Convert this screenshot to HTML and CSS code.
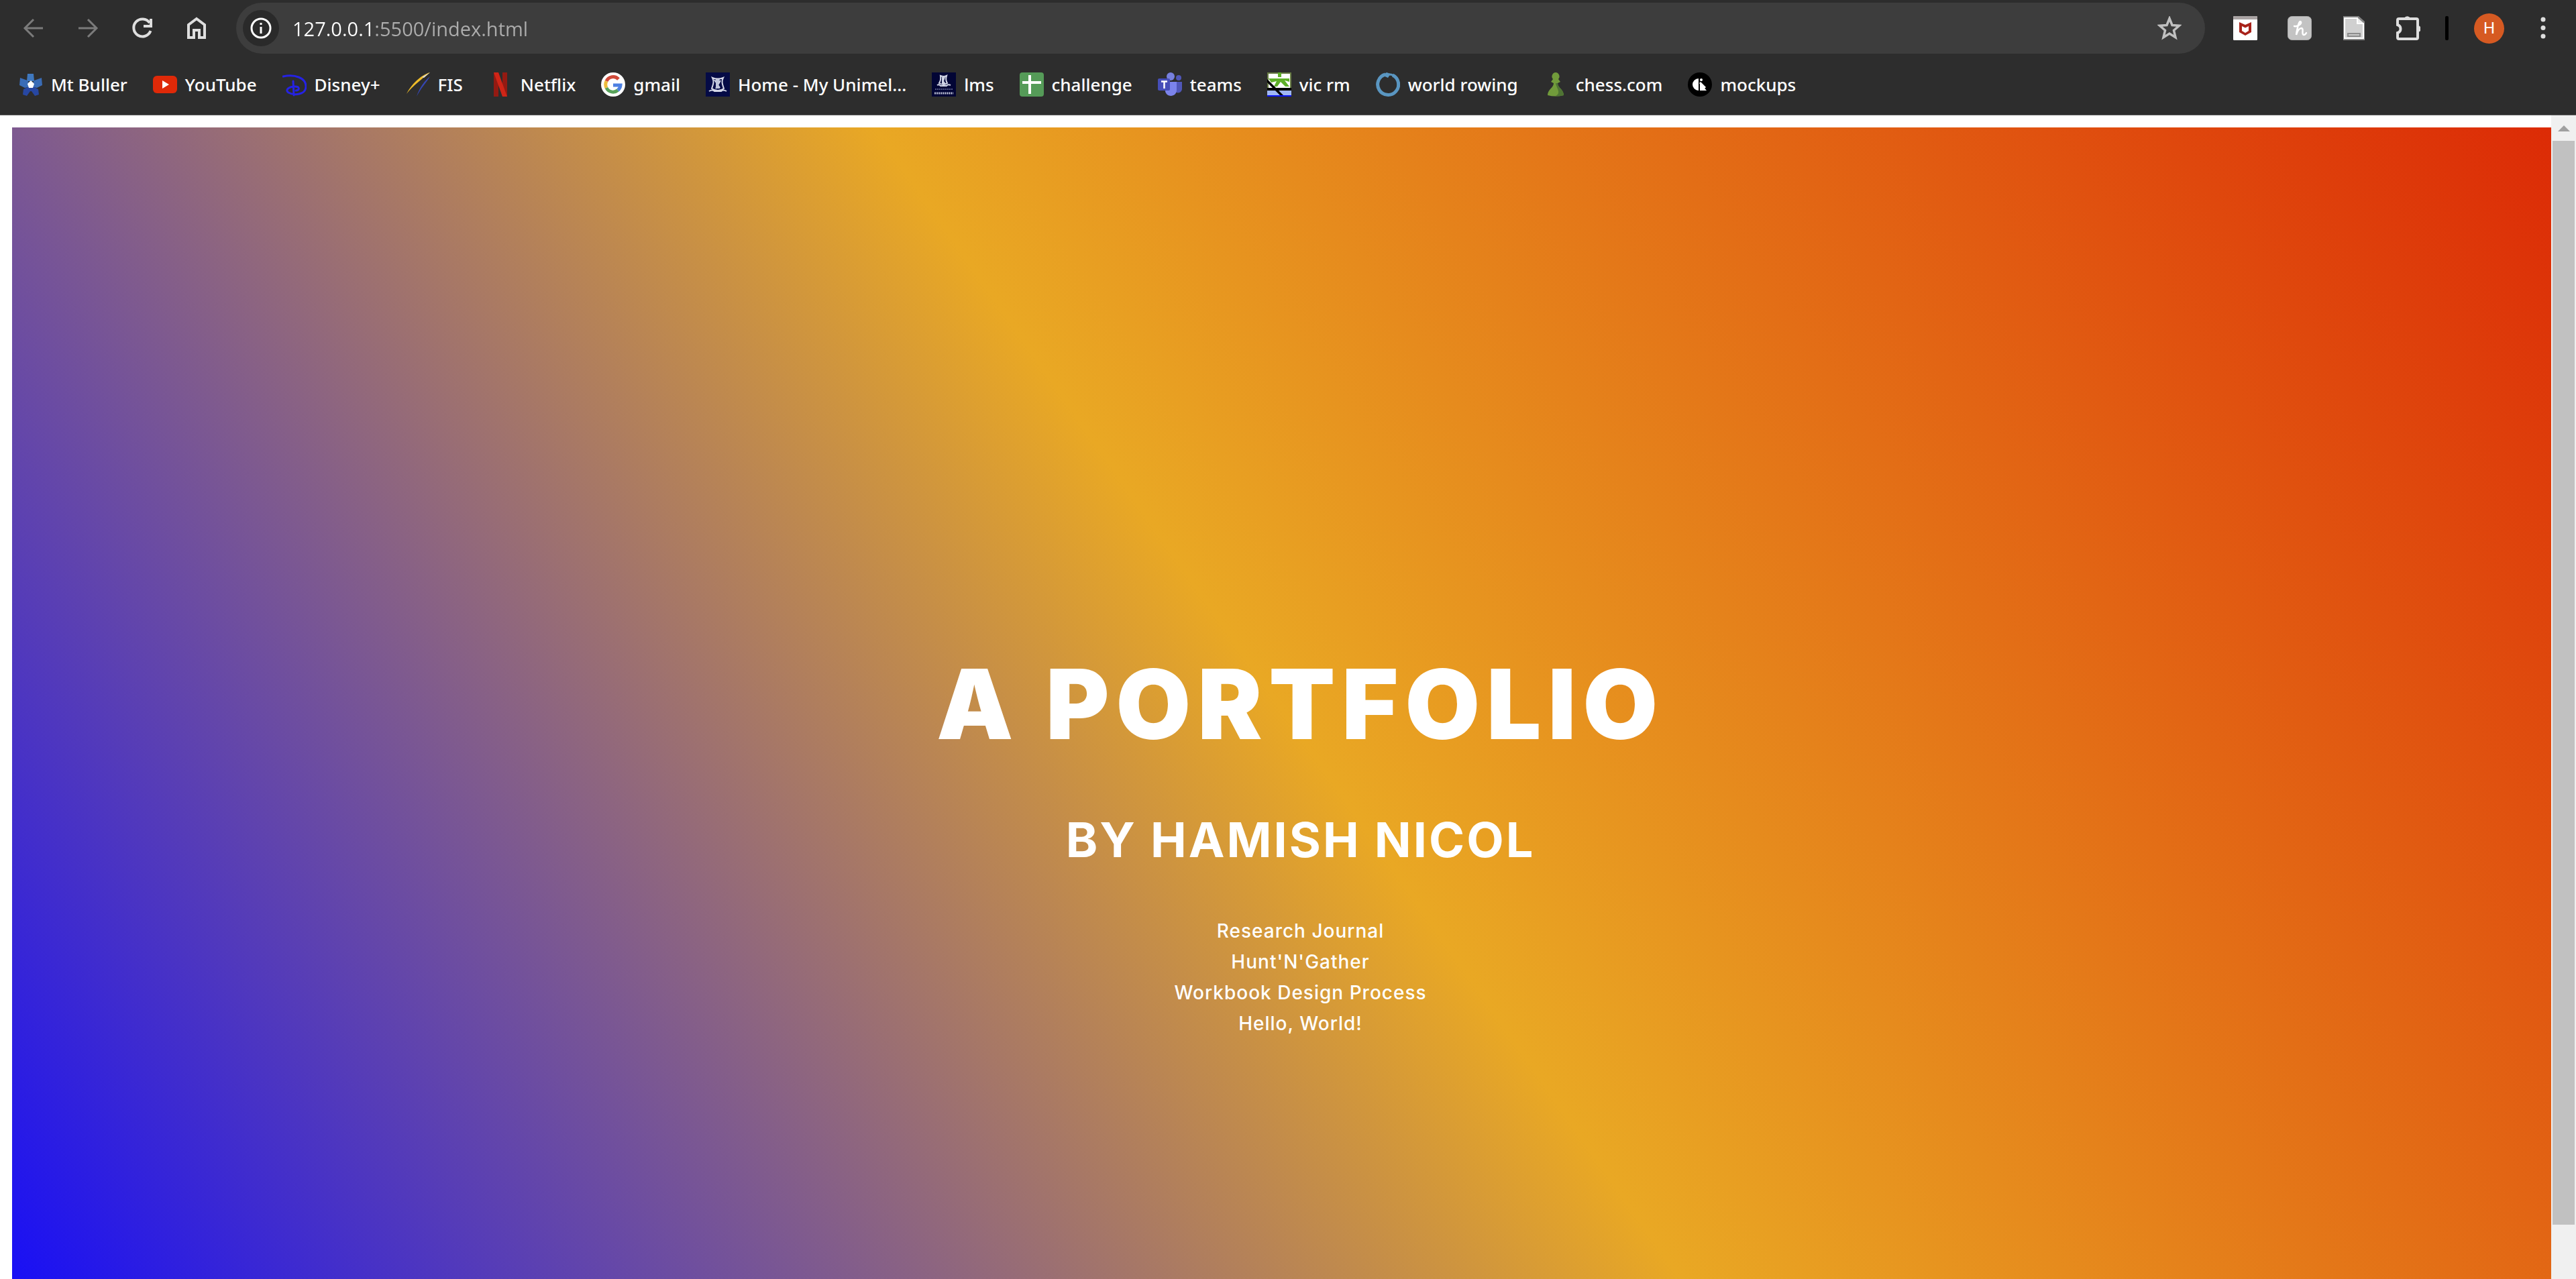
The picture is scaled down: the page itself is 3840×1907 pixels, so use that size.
FILE: index.html
```html
<!DOCTYPE html>
<html lang="en">
<head>
<meta charset="utf-8">
<title>A Portfolio</title>
<link rel="stylesheet" href="styles.css">
</head>
<body>
<header class="browser">
  <div class="toolbar">
    <div class="nav-buttons">
      <button class="icon-button dim" aria-label="Back"><svg viewBox="0 0 36 36"><path d="M32 18H6M18 5L5 18l13 13" fill="none" stroke="currentColor" stroke-width="3"/></svg></button>
      <button class="icon-button dim" aria-label="Forward"><svg viewBox="0 0 36 36"><path d="M4 18h26M18 5l13 13-13 13" fill="none" stroke="currentColor" stroke-width="3"/></svg></button>
      <button class="icon-button" aria-label="Reload"><svg viewBox="0 0 36 36"><path d="M29 10A13 13 0 1 0 30.500 22M31 4v11H20" fill="none" stroke="currentColor" stroke-width="4"/></svg></button>
      <button class="icon-button" aria-label="Home"><svg viewBox="0 0 36 36"><path d="M6 32V13L18 4l12 9v19h-8V21h-8v11z" fill="none" stroke="currentColor" stroke-width="4"/></svg></button>
    </div>
    <div class="omnibox">
      <button class="site-info" aria-label="Site information"><svg viewBox="0 0 36 36"><circle cx="18" cy="18" r="14" fill="none" stroke="currentColor" stroke-width="3"/><path d="M18 16v10M18 10v3" stroke="currentColor" stroke-width="3"/></svg></button>
      <input class="address" type="text" aria-label="Address" value="127.0.0.1:5500/index.html">
      <button class="icon-button star" aria-label="Bookmark this page"><svg viewBox="0 0 36 36"><path d="M18 3.500l4 10 10.500.800-8 7 2.500 10.500-9-5.700-9 5.700 2.500-10.500-8-7L14 13.500z" fill="none" stroke="currentColor" stroke-width="3.500"/></svg></button>
    </div>
    <div class="extensions">
      <button class="icon-button" aria-label="McAfee"><svg viewBox="0 0 36 36"><rect width="36" height="36" rx="1.500" fill="#fff"/><path d="M0 5V1.500A1.500 1.500 0 0 1 1.500 0h33A1.500 1.500 0 0 1 36 1.500V5z" fill="#a9a3a3"/><path d="M9 9l9 4 9-4v15l-9 5-9-5z" fill="#a8231b"/><path d="M13 15l5 2.500 5-2.500v7l-5 3-5-3z" fill="#fff"/></svg></button>
      <button class="icon-button" aria-label="Honey"><svg viewBox="0 0 36 36"><rect x=".5" y=".5" width="35" height="35" rx="6" fill="#c3c3c3" stroke="#ababab"/><path d="M10 15c5 1 11-3 10-6-2-4-5 5-7 19 2-7 5-10 8-10 4 1-1 9 3 10 2 0 3-1 4-3" fill="none" stroke="#fff" stroke-width="2.500" stroke-linecap="round"/></svg></button>
      <button class="icon-button" aria-label="Document viewer"><svg viewBox="0 0 36 36"><path d="M2 0h23l9 8v28H2z" fill="#858585"/><path d="M4 3h19v8h9v22H4z" fill="#d0d0d0" stroke="#fff" stroke-width="2"/><path d="M24 3l8 7h-8z" fill="#eee"/><path d="M8 25h20v6H8z" fill="#8c8c8c"/><path d="M10 28h16" stroke="#c9c9c9" stroke-width="2"/></svg></button>
      <button class="icon-button" aria-label="Extensions"><svg viewBox="0 0 36 36"><path d="M2 6q0-2 2-2h26q2 0 2 2v26q0 2-2 2H4q-2 0-2-2v-7c6-2 6-10 0-12z" fill="none" stroke="currentColor" stroke-width="4"/><path d="M12 3a5 5 0 0 1 9 0zM32 14a5 5 0 0 1 0 10z" fill="currentColor"/></svg></button>
    </div>
    <span class="divider"></span>
    <button class="avatar" aria-label="Profile">H</button>
    <button class="icon-button" aria-label="Menu"><svg viewBox="0 0 36 36"><g fill="currentColor"><circle cx="18" cy="5" r="3.500"/><circle cx="18" cy="17.500" r="3.500"/><circle cx="18" cy="30" r="3.500"/></g></svg></button>
  </div>
  <nav class="bookmarks" aria-label="Bookmarks">
    <a href="#"><svg viewBox="0 0 36 36"><path d="M13 2h9l1 11h-11z" fill="#3f78bf"/><path d="M2 8l11 4 5 9-9 2-8-4zM34 8l-11 4-5 9 9 2 8-4z" fill="#3a6cb6"/><path d="M17 20l-10 5-1 8 6 2 5-7h2l5 7 6-2-1-8-10-5z" fill="#2747a2"/><path d="M18 12l5 5-2 6h-6l-2-6z" fill="#fff"/></svg>Mt Buller</a>
    <a href="#"><svg viewBox="0 0 36 36"><rect y="5" width="36" height="26" rx="6" fill="#df2908"/><path d="M14 12l10 6-10 6z" fill="#fff"/></svg>YouTube</a>
    <a href="#"><svg viewBox="0 0 36 36"><path d="M1 6C18 2 36 8 35 22c-1 11-17 13-26 8-5-3-1-9 10-9 7 0 7 6 1 6M16 13l1 21" fill="none" stroke="#2522e4" stroke-width="3" stroke-linecap="round"/></svg>Disney+</a>
    <a href="#"><svg viewBox="0 0 36 36"><path d="M1 32C8 18 22 4 36 0C25 9 10 20 1 32z" fill="#efbc29"/><path d="M16 36C20 23 28 12 36 6C30 16 22 24 16 36z" fill="#3546b3"/><path d="M24 7L36 0l-9 8z" fill="#ddd"/></svg>FIS</a>
    <a href="#"><svg viewBox="0 0 36 36"><path d="M8 0h7v36H8zM21 0h7v36h-7z" fill="#941a12"/><path d="M8 0h7l13 36h-7z" fill="#cf2517"/></svg>Netflix</a>
    <a href="#"><svg viewBox="0 0 36 36"><circle cx="18" cy="18" r="18" fill="#fff"/><g fill="none" stroke-width="5"><path d="M26 10A11 11 0 0 0 8 13" stroke="#d04a3a"/><path d="M8 13a11 11 0 0 0 0 10" stroke="#edbd3c"/><path d="M8 23a11 11 0 0 0 17 3.500" stroke="#57a25a"/><path d="M25 26.500a11 11 0 0 0 4-7.500H18" stroke="#4d80e2"/></g></svg>gmail</a>
    <a href="#"><svg viewBox="0 0 36 36"><path d="M0 0h36v36H0z" fill="#050b46"/><path d="M10 8c5 2 11 2 16 0-3 6-1 10 1 16-5 4-13 4-18 0 2-6 4-10 1-16zM5 28q5-3 8 0h10q3-3 8 0M13 11l8 12M22 12l-7 12" fill="none" stroke="#d5d8e8" stroke-width="2"/><path d="M15 10h6l-2 9 2 5h-6z" fill="#bfc4da"/></svg>Home - My Unimel…</a>
    <a href="#"><svg viewBox="0 0 36 36"><path d="M0 0h36v36H0z" fill="#020535"/><path d="M13 5q5 2 9 0-2 6 1 11-5 4-12 0 3-5 2-11zM8 19q3-2 5 1h9q2-3 6-1" fill="none" stroke="#d5d8e8" stroke-width="2"/><path d="M15 7h5l-2 6 3 4h-6z" fill="#cfd3e4"/><path d="M5 25h26" stroke="#555984" stroke-width="2" stroke-dasharray="2 1"/><path d="M4 31h28" stroke="#b9bdd3" stroke-width="3" stroke-dasharray="2 1"/></svg>lms</a>
    <a href="#"><svg viewBox="0 0 36 36"><rect width="36" height="36" rx="4" fill="#559b58"/><path d="M15 4v28M4 15h28" stroke="#fff" stroke-width="4"/></svg>challenge</a>
    <a href="#"><svg viewBox="0 0 36 36"><circle cx="19" cy="6" r="6" fill="#7780de"/><circle cx="31" cy="8" r="4" fill="#5057b8"/><path d="M24 14h12v10c0 6-6 8-10 5z" fill="#5057b8"/><path d="M11 14h17v12c0 11-15 12-17 2z" fill="#7b83eb"/><rect y="9" width="18" height="18" rx="2" fill="#464eb8"/><path d="M5 13.500h9M9.500 13v11" stroke="#fff" stroke-width="2.500"/></svg>teams</a>
    <a href="#"><svg viewBox="0 0 36 36"><path d="M0 0h36v36H0z" fill="#fff"/><path d="M1 1h34v24H1z" fill="none" stroke="#667a43" stroke-width="2"/><path d="M16 0h5v7h-5zM2 9h31v5l-7-2 7 9h-6l-7-7-5 7h-5l4-8-8 2z" fill="#5eaf29"/><path d="M0 27h36v9H0z" fill="#9fb6f4"/><path d="M0 34h36v2H0z" fill="#0712f2"/><path d="M0 23h36v4H0zM0 10l24 24-5 0L0 15z" fill="#000"/></svg>vic rm</a>
    <a href="#"><svg viewBox="0 0 36 36"><path d="M14 3A15.500 15.500 0 1 0 25 4" fill="none" stroke="#5a96c1" stroke-width="5"/><path d="M9 4l7-4 6 2-4 6z" fill="#5a96c1"/><path d="M20 3c9 0 14 8 13 18" fill="none" stroke="#5a96c1" stroke-width="3"/></svg>world rowing</a>
    <a href="#"><svg viewBox="0 0 36 36"><path d="M18 0a6 6 0 0 1 4 10l3 4-4 2c0 7 9 9 9 18q-12 3-24 0c0-9 9-11 9-18l-4-2 3-4A6 6 0 0 1 18 0z" fill="#719b3b"/><path d="M18 16h3c0 7 9 9 9 18q-6 2-12 1c9-4 1-12 0-19z" fill="#4f7434"/></svg>chess.com</a>
    <a href="#"><svg viewBox="0 0 36 36"><circle cx="18" cy="18" r="18" fill="#000"/><path d="M16 9v18A9 9 0 0 1 16 9zM18 15l10 12H18z" fill="#fff"/><circle cx="20" cy="11" r="2" fill="#fff"/><path d="M18 15l8 8" stroke="#fff" stroke-width="3"/></svg>mockups</a>
  </nav>
</header>
<div class="viewport">
  <div class="page">
    <main class="hero">
      <h1>A PORTFOLIO</h1>
      <h2>BY HAMISH NICOL</h2>
      <ul class="links">
        <li><a href="#">Research Journal</a></li>
        <li><a href="#">Hunt'N'Gather</a></li>
        <li><a href="#">Workbook Design Process</a></li>
        <li><a href="#">Hello, World!</a></li>
      </ul>
    </main>
  </div>
  <div class="scrollbar">
    <span class="arrow"></span>
    <span class="thumb"></span>
  </div>
</div>
</body>
</html>
```
FILE: styles.css
```css
* { box-sizing: border-box; }

body {
  margin: 0;
  height: 100vh;
  display: flex;
  flex-direction: column;
  overflow: hidden;
  background: #fff;
}

button {
  border: 0;
  padding: 0;
  background: none;
  color: inherit;
  font: inherit;
}

svg { display: block; flex: none; width: 36px; height: 36px; }

/* Browser chrome */
.browser {
  flex: none;
  background: #2d2d2d;
  border-bottom: 1px solid #606060;
  color: #dedede;
  font-family: "Noto Sans", "Open Sans", sans-serif;
}

.toolbar {
  display: flex;
  align-items: center;
  padding: 4px 31px 0 32px;
}

.icon-button { display: block; width: 36px; height: 36px; }
.dim { color: #7b7b7b; }
.nav-buttons { display: flex; gap: 45px; margin-right: 41px; }

.omnibox {
  flex: 1;
  display: flex;
  align-items: center;
  height: 76px;
  padding: 0 35px 0 10px;
  border-radius: 38px;
  background: #3d3d3d;
}

.site-info {
  display: grid;
  place-items: center;
  width: 54px;
  height: 54px;
  border-radius: 50%;
  background: #2a2a2a;
  color: #fff;
}

.address {
  flex: 1;
  min-width: 0;
  margin-left: 20px;
  padding: 0;
  border: 0;
  /* host in white, port and path in grey */
  background: linear-gradient(90deg, #fff 0 4.23em, #adadad 4.23em);
  background-clip: text;
  -webkit-background-clip: text;
  color: transparent;
  font: 29px "Open Sans", "Noto Sans", sans-serif;
}

.star { color: #c0c0c0; }

.extensions { display: flex; gap: 45px; margin-left: 42px; }

.divider {
  width: 5px;
  height: 36px;
  margin: 0 38px 0 37px;
  border-radius: 2px;
  background: #000;
}

.avatar {
  width: 45px;
  height: 45px;
  margin-right: 40px;
  border-radius: 50%;
  background: #d65a22;
  color: #fff;
  font: 24px Roboto, sans-serif;
}

.bookmarks {
  display: flex;
  align-items: center;
  gap: 38px;
  height: 91px;
  padding: 0 28px;
}

.bookmarks a {
  display: flex;
  align-items: center;
  gap: 12px;
  color: #fff;
  font-size: 26px;
  font-weight: 500;
  line-height: 36px;
  text-decoration: none;
  white-space: nowrap;
}

/* Page area */
.viewport { flex: 1; min-height: 0; display: flex; }

.page {
  flex: 1;
  padding: 18px 0 0 18px;
  overflow: hidden;
}

.hero {
  height: calc(100vh - 172px);
  padding: 788px 0 0 56px;
  background: linear-gradient(55deg, #180ff6, #e9a824 50%, #dc2b06);
  color: #fff;
  font-family: Inter, "Open Sans", sans-serif;
  text-align: center;
}

h1 {
  margin: 0 0 94px;
  font-size: 144px;
  font-weight: 900;
  line-height: 144px;
  letter-spacing: 10px;
}

h2 {
  margin: 0 0 77px;
  font-size: 72px;
  font-weight: 700;
  line-height: 72px;
  letter-spacing: 3px;
}

.links {
  margin: 0;
  padding: 0;
  list-style: none;
  font-size: 28px;
  font-weight: 500;
  line-height: 46px;
  letter-spacing: 1px;
}

.links a { color: #fff; text-decoration: none; }

/* Scrollbar */
.scrollbar {
  display: flex;
  flex-direction: column;
  width: 37px;
  padding: 15px 2px 81px;
  background: #f0f0f0;
}

.arrow {
  align-self: center;
  margin-bottom: 14px;
  border: 9px solid transparent;
  border-top: 0;
  border-bottom: 9px solid #a0a0a0;
}

.thumb { flex: 1; background: #c1c1c1; }
```
